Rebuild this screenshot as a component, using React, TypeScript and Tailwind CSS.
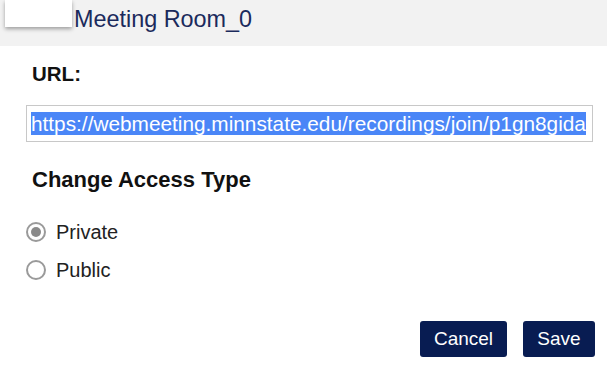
export default function App() {
  const url = "https://webmeeting.minnstate.edu/recordings/join/p1gn8gida";

  return (
    <div className="w-[607px] h-[374px] bg-white font-['Liberation_Sans',Arial,sans-serif] overflow-hidden">
      {/* Header */}
      <div className="h-[46px] bg-[#f2f2f2] flex items-start">
        <div className="ml-[5px] w-[67px] h-[27px] bg-white shadow-[0_2px_4px_rgba(0,0,0,0.35)]" />
        <div className="ml-[2px] mt-[6px] text-[23.4px] leading-[26px] text-[#1b2a5c]">
          Meeting Room_0
        </div>
      </div>

      <div className="pl-[26px] pr-[14px]">
        <div className="pl-[6px] pt-[16px] text-[20.5px] leading-[24px] font-bold text-[#111]">URL:</div>

        {/* URL field */}
        <div className="mt-[19px] h-[37px] border border-[#c8c8c8] flex items-center pl-[4px] overflow-hidden">
          <span className="bg-[#4a86f7] text-white text-[20.8px] leading-[23px] whitespace-nowrap">
            {url}
          </span>
        </div>

        <div className="pl-[6px] mt-[26px] text-[22px] leading-[24px] font-bold text-[#111]">
          Change Access Type
        </div>

        {/* Radios */}
        <div className="mt-[30px] flex flex-col gap-[18px]">
          <label className="flex items-center gap-[10px] h-[20px]">
            <span className="w-[20px] h-[20px] rounded-full border-2 border-[#9a9a9a] bg-white flex items-center justify-center">
              <span className="w-[10px] h-[10px] rounded-full bg-[#8a8a8a]" />
            </span>
            <span className="text-[20px] leading-[22px] text-[#222]">Private</span>
          </label>
          <label className="flex items-center gap-[10px] h-[20px]">
            <span className="w-[20px] h-[20px] rounded-full border-2 border-[#9a9a9a] bg-white" />
            <span className="text-[20px] leading-[22px] text-[#222]">Public</span>
          </label>
        </div>
      </div>

      {/* Buttons */}
      <div className="mt-[41px] pr-[12px] flex justify-end gap-[16px]">
        <button className="w-[87px] h-[36px] rounded-[3px] bg-[#081c52] text-white text-[19px]">
          Cancel
        </button>
        <button className="w-[72px] h-[36px] rounded-[3px] bg-[#081c52] text-white text-[19px]">
          Save
        </button>
      </div>
    </div>
  );
}
